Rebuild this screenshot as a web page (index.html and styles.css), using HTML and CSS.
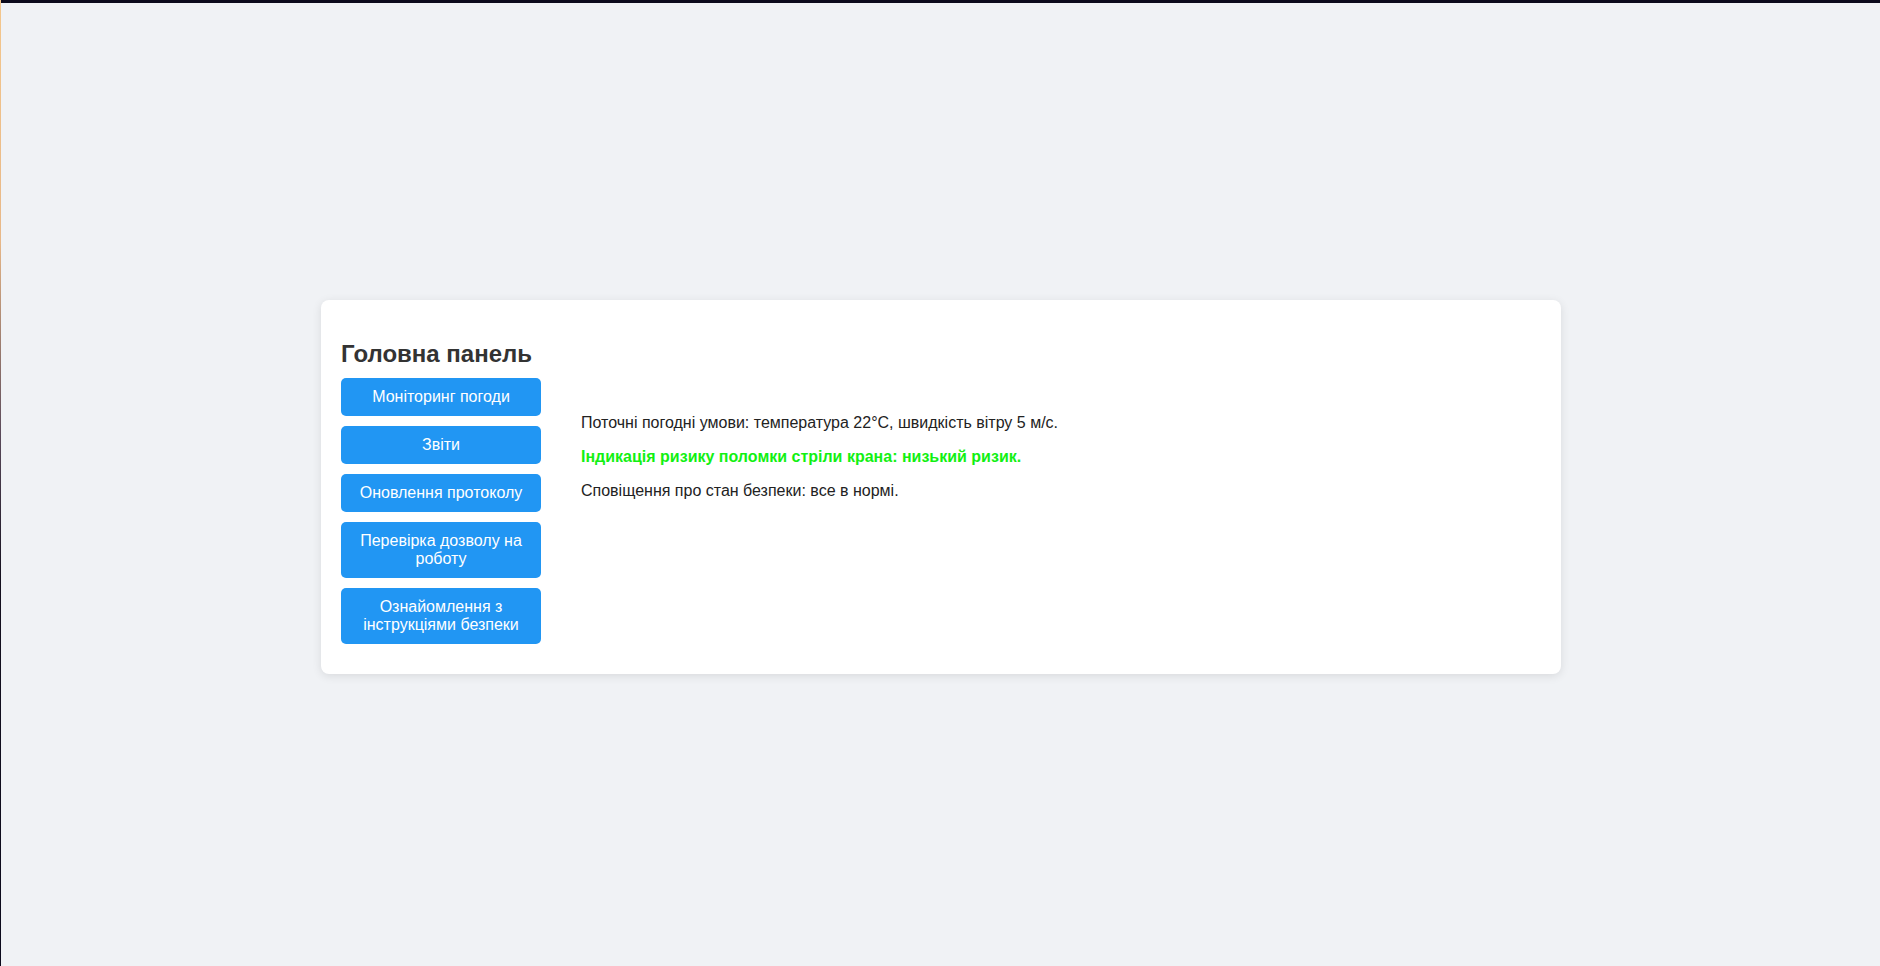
FILE: index.html
```html
<!DOCTYPE html>
<html lang="uk">
<head>
<meta charset="utf-8">
<title>Головна панель</title>
<link rel="stylesheet" href="styles.css">
</head>
<body>
<div class="frame-top"></div>
<div class="frame-left"></div>
<div class="page">
  <div class="card">
    <aside class="sidebar">
      <h2 class="title">Головна панель</h2>
      <button class="nav-btn">Моніторинг погоди</button>
      <button class="nav-btn">Звіти</button>
      <button class="nav-btn">Оновлення протоколу</button>
      <button class="nav-btn">Перевірка дозволу на роботу</button>
      <button class="nav-btn">Ознайомлення з інструкціями безпеки</button>
    </aside>
    <main class="content">
      <p class="info">Поточні погодні умови: температура 22°C, швидкість вітру 5 м/с.</p>
      <p class="info risk">Індикація ризику поломки стріли крана: низький ризик.</p>
      <p class="info">Сповіщення про стан безпеки: все в нормі.</p>
    </main>
  </div>
</div>
</body>
</html>
```

FILE: styles.css
```css
html, body {
  margin: 0;
  padding: 0;
}

body {
  background: #f0f2f5;
  font-family: "Liberation Sans", Arial, sans-serif;
  color: #222;
}

.frame-top {
  position: fixed;
  top: 0;
  left: 0;
  right: 0;
  height: 3px;
  background: #0c0a1c;
  z-index: 2;
}

.frame-left {
  position: fixed;
  top: 0;
  bottom: 0;
  left: 0;
  width: 1px;
  background: linear-gradient(to bottom, #f4c78c 0%, #e8b888 25%, #5a4a5a 45%, #14101e 60%, #0c0a1c 100%);
  z-index: 2;
}

.page {
  box-sizing: border-box;
  height: 100vh;
  padding-top: 8px;
  padding-left: 2px;
  display: flex;
  align-items: center;
  justify-content: center;
}

.card {
  width: 1200px;
  padding: 20px;
  background: #fff;
  border-radius: 8px;
  box-shadow: 0 2px 10px rgba(0, 0, 0, 0.1);
  display: flex;
  gap: 40px;
  align-items: flex-start;
}

.sidebar {
  width: 200px;
  flex: none;
  display: flex;
  flex-direction: column;
}

.title {
  margin: 20px 0 10px;
  font-size: 24px;
  font-weight: bold;
  color: #333;
  white-space: nowrap;
}

.nav-btn {
  display: block;
  width: 200px;
  margin: 0 0 10px;
  padding: 10px;
  border: none;
  border-radius: 5px;
  background: #2196f3;
  color: #fff;
  font-family: "Liberation Sans", Arial, sans-serif;
  font-size: 16px;
  line-height: 18px;
  text-align: center;
}

.content {
  flex: 1;
  padding-top: 94px;
}

.info {
  margin: 0 0 16px;
  font-size: 16px;
  line-height: 18px;
  color: #222;
}

.risk {
  color: #12f012;
  font-weight: bold;
}
```
